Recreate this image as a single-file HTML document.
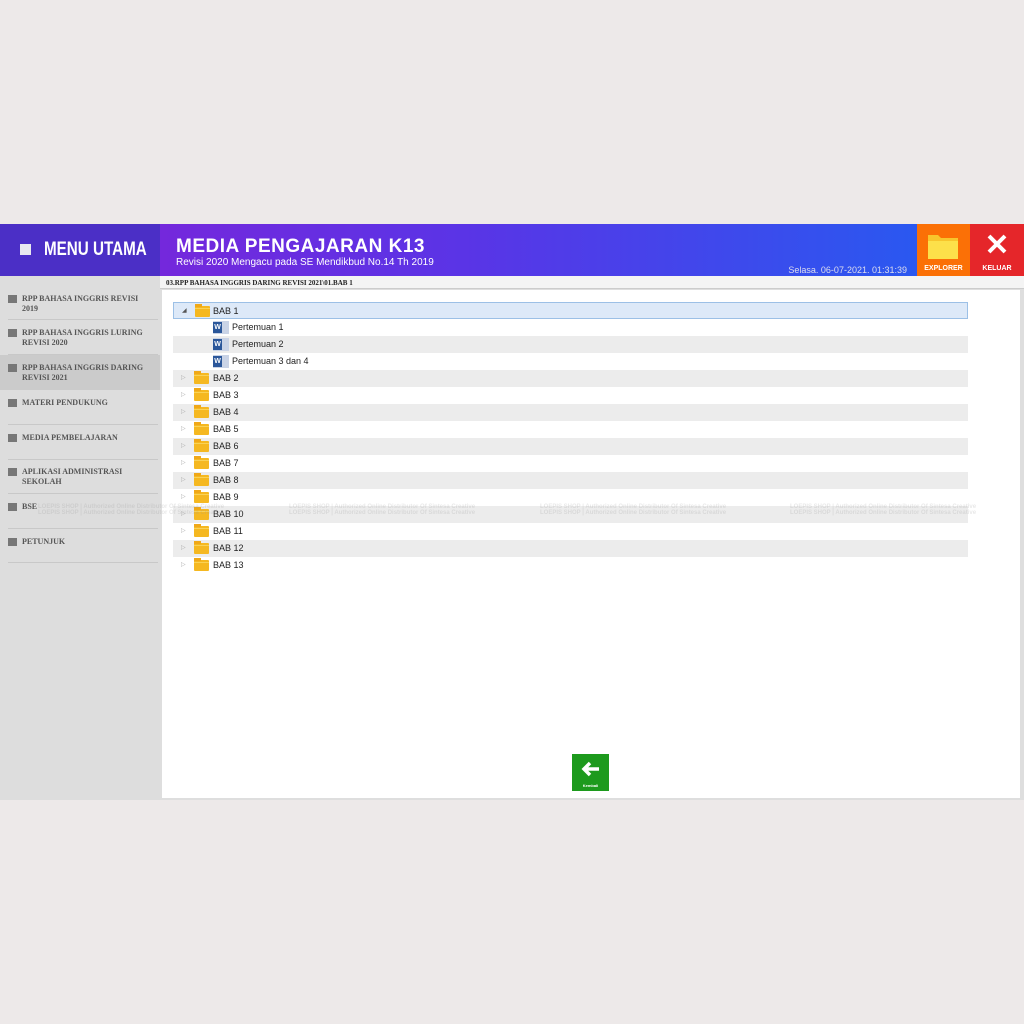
<!DOCTYPE html>
<html><head><style>
*{margin:0;padding:0;box-sizing:border-box}
body{width:1024px;height:1024px;background:#ede9e9;font-family:"Liberation Sans",sans-serif;position:relative;overflow:hidden}
.app{position:absolute;left:0;top:224px;width:1024px;height:576px;background:#dedede}
.hl{position:absolute;left:0;top:0;width:160px;height:52px;background:#4b2fc6;color:#fff}
.hl .sq{position:absolute;left:20px;top:20px;width:11px;height:11px;background:#e8e8f0}
.hl .t{position:absolute;left:44px;top:15px;font:bold 19px "Liberation Sans Narrow","Liberation Sans",sans-serif;white-space:nowrap;transform:scaleX(.8);transform-origin:left}
.hr{position:absolute;left:160px;top:0;width:757px;height:52px;background:linear-gradient(90deg,#7428dc,#5a34e6 40%,#2a58f0)}
.hr .t{position:absolute;left:16px;top:12px;color:#fff;font:bold 19px "Liberation Sans",sans-serif;letter-spacing:.5px}
.hr .s{position:absolute;left:16px;top:33px;color:#fff;font-size:10px}
.hr .d{position:absolute;right:10px;top:41px;color:#dde;font-size:9px}
.ex{position:absolute;left:917px;top:0;width:53px;height:52px;background:#fb7006}
.kl{position:absolute;left:970px;top:0;width:54px;height:52px;background:#e5262a}
.lab{position:absolute;bottom:4px;width:100%;text-align:center;color:#fff;font:bold 7px "Liberation Sans",sans-serif}
.bc{position:absolute;left:160px;top:52px;width:864px;height:13px;background:#f4f4f4;border-bottom:1px solid #ccc;font:bold 7px "Liberation Serif",serif;padding:3px 6px;color:#222}
.side{position:absolute;left:0;top:52px;width:160px;height:524px;background:#dddddd}
.it{position:absolute;left:8px;width:150px;border-bottom:1px solid #c8c8c8;font:bold 8px "Liberation Serif",serif;color:#555;padding-left:14px;padding-right:10px;line-height:10px}
.it:before{content:"";position:absolute;left:0;top:1px;width:9px;height:8px;background:#777}
.main{position:absolute;left:162px;top:66px;width:858px;height:508px;background:#fff}
.row{position:absolute;left:11px;width:795px;height:17px;font-size:9px;color:#222;line-height:17px}
.g{background:#ececec}
.sel{background:#dde9f8;border:1px solid #9cc0e6}
.ar{position:absolute;left:8px;color:#aaa;font-size:6px}
.fo{position:absolute;left:21px;top:3px;width:15px;height:11px;background:#f5b821;border-radius:1px}
.fo:before{content:"";position:absolute;left:0;top:-2px;width:7px;height:3px;background:#f0a818}
.fo:after{content:"";position:absolute;left:0;top:2px;width:15px;height:1px;background:#f9d257}
.w{position:absolute;left:40px;top:2px;width:16px;height:13px;background:#c9d3e6}
.w b{position:absolute;left:0;top:1px;width:9px;height:11px;background:#2b579a;color:#fff;font-size:7px;line-height:11px;text-align:center}
.btn{position:absolute;left:572px;top:754px;width:37px;height:37px;background:#1d9a1d}
.wm{position:absolute;top:504px;font:bold 6px "Liberation Sans",sans-serif;color:rgba(150,150,150,.22);line-height:6px}
</style></head><body>
<div class="app">
<div class="hl"><div class="sq"></div><div class="t">MENU UTAMA</div></div>
<div class="hr"><div class="t">MEDIA PENGAJARAN K13</div><div class="s">Revisi 2020 Mengacu pada SE Mendikbud No.14 Th 2019</div><div class="d">Selasa. 06-07-2021. 01:31:39</div></div>
<div class="ex"><svg width="53" height="40" style="position:absolute;left:0;top:8px"><path d="M11 3h10l3 3h17v20H11z" fill="#f8c52c"/><rect x="11" y="9" width="30" height="18" fill="#fde04a"/></svg><div class="lab">EXPLORER</div></div>
<div class="kl"><svg width="54" height="40" style="position:absolute;left:0;top:8px"><path d="M19 4L35 20M35 4L19 20" stroke="#fff" stroke-width="4"/></svg><div class="lab">KELUAR</div></div>
<div class="side">
<div class="it" style="top:18px;height:26px">RPP BAHASA INGGRIS REVISI 2019</div>
<div class="it" style="top:52px;height:27px">RPP BAHASA INGGRIS LURING REVISI 2020</div>
<div style="position:absolute;left:0;top:79px;width:160px;height:35px;background:#cbcbcb"></div>
<div class="it" style="top:87px;height:27px;border:0">RPP BAHASA INGGRIS DARING REVISI 2021</div>
<div class="it" style="top:122px;height:27px">MATERI PENDUKUNG</div>
<div class="it" style="top:157px;height:27px">MEDIA PEMBELAJARAN</div>
<div class="it" style="top:191px;height:27px">APLIKASI ADMINISTRASI SEKOLAH</div>
<div class="it" style="top:226px;height:27px">BSE</div>
<div class="it" style="top:261px;height:26px">PETUNJUK</div>
</div>
<div class="bc">03.RPP BAHASA INGGRIS DARING REVISI 2021\01.BAB 1</div>
</div>
<div class="main" style="top:290px;height:508px">
<div class="row sel" style="top:12px"><span class="ar" style="color:#555">◢</span><div class="fo"></div><span style="position:absolute;left:39px">BAB 1</span></div>
<div class="row" style="top:29px"><div class="w"><b>W</b></div><span style="position:absolute;left:59px">Pertemuan 1</span></div>
<div class="row g" style="top:46px"><div class="w"><b>W</b></div><span style="position:absolute;left:59px">Pertemuan 2</span></div>
<div class="row" style="top:63px"><div class="w"><b>W</b></div><span style="position:absolute;left:59px">Pertemuan 3 dan 4</span></div>
<div class="row g" style="top:80px"><span class="ar">▷</span><div class="fo"></div><span style="position:absolute;left:40px">BAB 2</span></div>
<div class="row" style="top:97px"><span class="ar">▷</span><div class="fo"></div><span style="position:absolute;left:40px">BAB 3</span></div>
<div class="row g" style="top:114px"><span class="ar">▷</span><div class="fo"></div><span style="position:absolute;left:40px">BAB 4</span></div>
<div class="row" style="top:131px"><span class="ar">▷</span><div class="fo"></div><span style="position:absolute;left:40px">BAB 5</span></div>
<div class="row g" style="top:148px"><span class="ar">▷</span><div class="fo"></div><span style="position:absolute;left:40px">BAB 6</span></div>
<div class="row" style="top:165px"><span class="ar">▷</span><div class="fo"></div><span style="position:absolute;left:40px">BAB 7</span></div>
<div class="row g" style="top:182px"><span class="ar">▷</span><div class="fo"></div><span style="position:absolute;left:40px">BAB 8</span></div>
<div class="row" style="top:199px"><span class="ar">▷</span><div class="fo"></div><span style="position:absolute;left:40px">BAB 9</span></div>
<div class="row g" style="top:216px"><span class="ar">▷</span><div class="fo"></div><span style="position:absolute;left:40px">BAB 10</span></div>
<div class="row" style="top:233px"><span class="ar">▷</span><div class="fo"></div><span style="position:absolute;left:40px">BAB 11</span></div>
<div class="row g" style="top:250px"><span class="ar">▷</span><div class="fo"></div><span style="position:absolute;left:40px">BAB 12</span></div>
<div class="row" style="top:267px"><span class="ar">▷</span><div class="fo"></div><span style="position:absolute;left:40px">BAB 13</span></div>
</div>
<div class="wm" style="left:38px">LOEPIS SHOP | Authorized Online Distributor Of Sintesa Creative<br>LOEPIS SHOP | Authorized Online Distributor Of Sintesa Creative</div>
<div class="wm" style="left:289px">LOEPIS SHOP | Authorized Online Distributor Of Sintesa Creative<br>LOEPIS SHOP | Authorized Online Distributor Of Sintesa Creative</div>
<div class="wm" style="left:540px">LOEPIS SHOP | Authorized Online Distributor Of Sintesa Creative<br>LOEPIS SHOP | Authorized Online Distributor Of Sintesa Creative</div>
<div class="wm" style="left:790px">LOEPIS SHOP | Authorized Online Distributor Of Sintesa Creative<br>LOEPIS SHOP | Authorized Online Distributor Of Sintesa Creative</div>
<div class="btn"><svg width="37" height="28"><path d="M12 15h15M18 9l-6 6 6 6" stroke="#fff" stroke-width="3.5" fill="none"/></svg><div style="position:absolute;bottom:3px;width:100%;text-align:center;color:#fff;font:bold 4px sans-serif">Kembali</div></div>
</body></html>
